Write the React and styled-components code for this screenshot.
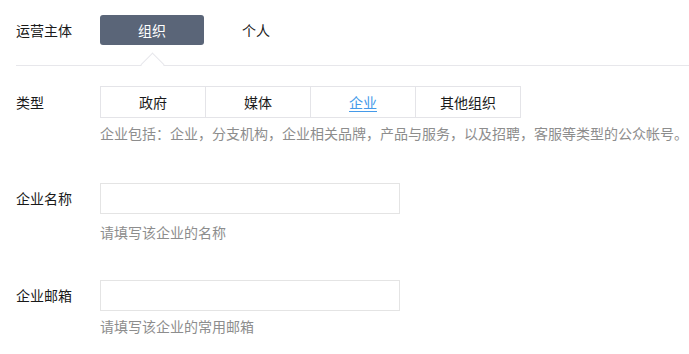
import React from "react";
import styled, { createGlobalStyle } from "styled-components";

const Global = createGlobalStyle`
  html, body { margin: 0; padding: 0; background: #fff; }
  body {
    font-family: "Noto Sans CJK SC", "Liberation Sans", sans-serif;
    font-size: 14px;
    color: #222;
  }
  * { box-sizing: border-box; }
`;

const Page = styled.div`
  padding: 15px 0 0 16px;
  width: 689px;
`;

const TopSection = styled.div`
  display: flex;
  align-items: center;
  padding-bottom: 20px;
  border-bottom: 1px solid #e7e7eb;
`;

const Label = styled.div`
  width: 84px;
  flex: none;
  line-height: ${(p) => p.$h || 30}px;
  font-size: 14px;
  color: #1a1a1a;
  white-space: nowrap;
`;

const SegWrap = styled.div`
  display: flex;
`;

const SegButton = styled.div`
  position: relative;
  width: 104px;
  height: 30px;
  line-height: 30px;
  text-align: center;
  font-size: 14px;
  border-radius: 3px;
  color: ${(p) => (p.$active ? "#fff" : "#1a1a1a")};
  background: ${(p) => (p.$active ? "#5a6578" : "transparent")};
`;

const Caret = styled.span`
  position: absolute;
  left: 50%;
  top: 41px;
  width: 17px;
  height: 17px;
  margin-left: -8.5px;
  background: #fff;
  border-top: 1px solid #e7e7eb;
  border-left: 1px solid #e7e7eb;
  transform: rotate(45deg);
`;

const Group = styled.div`
  display: flex;
  align-items: flex-start;
  margin-top: ${(p) => p.$mt}px;
`;

const Controls = styled.div`
  display: flex;
  flex-direction: column;
  align-items: flex-start;
`;

const Tabs = styled.div`
  display: flex;
  border: 1px solid #e4e4e8;
  border-left: none;
`;

const Tab = styled.div`
  width: 105px;
  height: 30px;
  line-height: 30px;
  text-align: center;
  font-size: 14px;
  border-left: 1px solid #e4e4e8;
  color: ${(p) => (p.$active ? "#459ae9" : "#1a1a1a")};
  text-decoration: ${(p) => (p.$active ? "underline" : "none")};
  text-underline-offset: 3px;
`;

const Help = styled.div`
  margin-top: ${(p) => p.$mt ?? 5}px;
  line-height: 20px;
  font-size: 14px;
  color: #8d8d8d;
  white-space: nowrap;
`;

const Input = styled.input`
  width: 300px;
  height: 31px;
  border: 1px solid #e4e4e4;
  outline: none;
  padding: 0 8px;
  font-family: inherit;
  font-size: 14px;
  background: #fff;
`;

export default function App() {
  return (
    <>
      <Global />
      <Page>
        <TopSection>
          <Label>运营主体</Label>
          <SegWrap>
            <SegButton $active>
              组织
              <Caret />
            </SegButton>
            <SegButton>个人</SegButton>
          </SegWrap>
        </TopSection>

        <Group $mt={20}>
          <Label $h={32}>类型</Label>
          <Controls>
            <Tabs>
              <Tab>政府</Tab>
              <Tab>媒体</Tab>
              <Tab $active>企业</Tab>
              <Tab>其他组织</Tab>
            </Tabs>
            <Help>企业包括：企业，分支机构，企业相关品牌，产品与服务，以及招聘，客服等类型的公众帐号。</Help>
          </Controls>
        </Group>

        <Group $mt={40}>
          <Label $h={31}>企业名称</Label>
          <Controls>
            <Input />
            <Help $mt={8}>请填写该企业的名称</Help>
          </Controls>
        </Group>

        <Group $mt={38}>
          <Label $h={31}>企业邮箱</Label>
          <Controls>
            <Input />
            <Help $mt={5}>请填写该企业的常用邮箱</Help>
          </Controls>
        </Group>
      </Page>
    </>
  );
}
